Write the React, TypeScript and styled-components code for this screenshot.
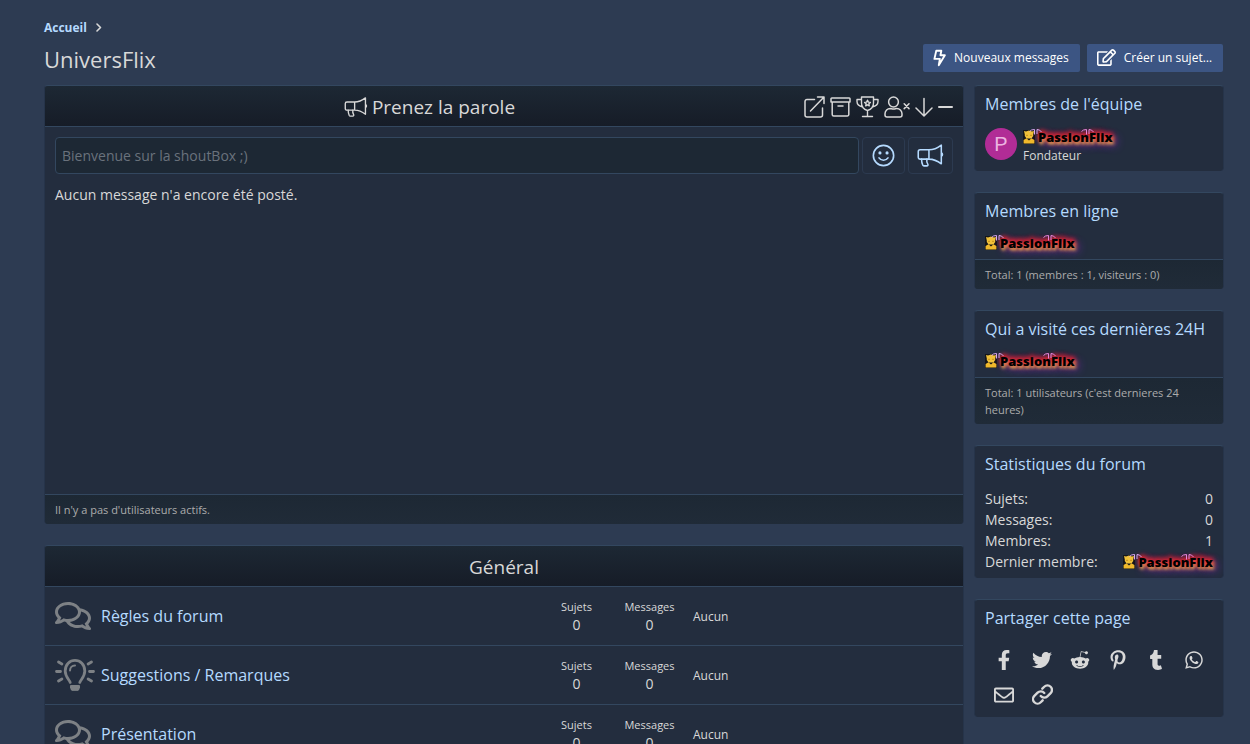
import React from "react";
import styled, { createGlobalStyle } from "styled-components";
import {
  FaFacebookF,
  FaTwitter,
  FaRedditAlien,
  FaPinterestP,
  FaTumblr,
  FaWhatsapp,
  FaRegEnvelope,
  FaRegComments,
  FaRegEdit,
} from "react-icons/fa";

const color = {
  page: "#2d3b52",
  block: "#232d3e",
  edge: "#26344a",
  line: "#33475f",
  dark: "#1d2834",
  deep: "#161c27",
  text: "#d8d8d8",
  muted: "#acacac",
  dim: "#6a727c",
  link: "#b5daff",
  button: "#3c5583",
};

const GlobalStyle = createGlobalStyle`
  *, *::before, *::after { box-sizing: border-box; }
  body {
    margin: 0;
    background: ${color.page};
    color: ${color.text};
    font-family: "Open Sans", "Noto Sans", sans-serif;
    font-size: 14px;
    line-height: 21px;
  }
  a { color: ${color.link}; text-decoration: none; }
  h1, h2, h3, dl, dd, dt, ul, ol, p { margin: 0; padding: 0; font-weight: 400; }
  ul, ol { list-style: none; }
  button, input { font: inherit; color: inherit; }
`;

const Page = styled.div`
  padding: 17px 26px 21px 44px;
`;

const Breadcrumb = styled.nav`
  display: flex;
  align-items: center;
  gap: 9px;
  height: 21px;
  font-size: 12px;
  font-weight: 700;
`;

const TitleBar = styled.header`
  display: flex;
  align-items: center;
  justify-content: space-between;
  height: 47px;
  padding-bottom: 8px;
`;

const PageTitle = styled.h1`
  padding-top: 3px;
  font-size: 22px;
  line-height: 34px;
`;

const Actions = styled.div`
  display: flex;
  gap: 7px;
  padding-right: 1px;
`;

const ActionButton = styled.a`
  display: flex;
  align-items: center;
  gap: 8px;
  height: 28px;
  padding: 0 11px 0 10px;
  border-radius: 2px;
  background: ${color.button};
  color: #fff;
  font-size: 12px;
`;

const Columns = styled.div`
  display: grid;
  grid-template-columns: minmax(0, 1fr) 250px;
  gap: 10px;
  align-items: start;
`;

const Stack = styled.div`
  display: flex;
  flex-direction: column;
  gap: 21px;
`;

const Block = styled.section`
  border: 1px solid ${color.edge};
  border-top-color: ${color.line};
  border-bottom: 0;
  border-radius: 4px;
  background: ${color.block};
`;

const BlockHeader = styled.div`
  display: flex;
  align-items: center;
  height: 41px;
  padding: 1px 10px 0;
  border-bottom: 1px solid ${color.line};
  border-radius: 3px 3px 0 0;
  background: linear-gradient(${color.dark}, ${color.deep});
`;

const BlockTitle = styled.h2`
  display: flex;
  flex: 1;
  align-items: center;
  justify-content: center;
  gap: 4px;
  font-size: 19px;
  line-height: 28px;
`;

const Tools = styled.div`
  display: flex;
  align-items: center;
  gap: 5px;
`;

const IconButton = styled.button`
  display: flex;
  padding: 0;
  border: 0;
  background: none;
  cursor: pointer;
`;

const ShoutBody = styled.div`
  min-height: 367px;
  padding: 10px;
`;

const ShoutForm = styled.form`
  display: flex;
  gap: 3px;
  margin-bottom: 10px;
`;

const ShoutInput = styled.input`
  flex: 1;
  min-width: 0;
  height: 37px;
  padding: 0 6px;
  border: 1px solid ${color.line};
  border-radius: 4px;
  background: ${color.dark};
  &::placeholder { color: ${color.dim}; opacity: 1; }
`;

const FormButton = styled.button<{ $wide?: boolean }>`
  display: flex;
  align-items: center;
  justify-content: center;
  width: ${(p) => (p.$wide ? 45 : 43)}px;
  padding: 0;
  border: 1px solid #2c3a50;
  border-radius: 4px;
  background: none;
  color: ${color.link};
  cursor: pointer;
`;

const BlockFooter = styled.footer`
  padding: 6px 10px;
  border-top: 1px solid ${color.line};
  border-radius: 0 0 3px 3px;
  background: linear-gradient(${color.dark}, #202b38);
  color: ${color.muted};
  font-size: 11px;
  line-height: 17px;
`;

const Forum = styled.li`
  display: grid;
  grid-template-columns: 46px minmax(0, 1fr) 73px 73px 277px;
  align-items: center;
  min-height: 58px;
  padding-left: 10px;
  & + & {
    min-height: 59px;
    border-top: 1px solid ${color.line};
  }
`;

const ForumIcon = styled.span`
  display: flex;
  color: #7d8185;
`;

const ForumTitle = styled.h3`
  font-size: 16px;
  line-height: 24px;
`;

const Stat = styled.dl`
  text-align: center;
  dt { font-size: 11px; line-height: 17px; }
  dd { line-height: 20px; }
`;

const LastPost = styled.span`
  padding-left: 7px;
  font-size: 12px;
`;

const WidgetTitle = styled.h3`
  height: 37px;
  padding: 6px 10px;
  color: ${color.link};
  font-size: 16px;
  line-height: 25px;
`;

const WidgetBody = styled.div`
  padding: 5px 10px;
`;

const StatsBody = styled.dl`
  && { padding: 5px 10px 6px; }
`;

const OnlineBody = styled.div`
  padding: 4px 10px 7px;
  line-height: 18px;
`;

const StaffRow = styled.div`
  display: flex;
  gap: 6px;
  padding-bottom: 6px;
`;

const Avatar = styled.a`
  display: flex;
  align-items: center;
  justify-content: center;
  width: 32px;
  height: 32px;
  border-radius: 50%;
  background: #b12c96;
  color: #ecb4e1;
  font-family: "Liberation Sans", sans-serif;
  font-size: 20px;
`;

const StaffInfo = styled.div`
  display: flex;
  flex-direction: column;
  height: 32px;
  font-size: 12px;
`;

const StaffRole = styled.span`
  line-height: 20px;
`;

const UserLink = styled.a`
  position: relative;
  display: inline-flex;
  align-items: center;
  gap: 3px;
  height: 18px;
  line-height: 18px;
  vertical-align: top;
`;

const UserName = styled.span`
  color: #000;
  font-size: 13px;
  font-weight: 800;
  text-shadow:
    0 -2px 4px #ff2222,
    1px -1px 6px #e0184a,
    1px 2px 3px #e0c060,
    2px 2px 4px #c08a40,
    4px 3px 9px #8a2cd0;
`;

const Sparkles = styled.svg`
  position: absolute;
  top: 1px;
  left: 6px;
`;

const Pair = styled.div`
  display: flex;
  align-items: center;
  justify-content: space-between;
  height: 21px;
`;

const PairValue = styled.dd`
  display: flex;
`;

const ShareList = styled.ul`
  display: grid;
  grid-template-columns: repeat(auto-fill, 38px);
  grid-auto-rows: 35px;
`;

const ShareLink = styled.a`
  display: flex;
  align-items: center;
  justify-content: center;
  height: 100%;
  color: ${color.text};
  font-size: 20px;
`;

type LineProps = { w: number; h: number; box: string; stroke?: number; children: React.ReactNode };

const Line = ({ w, h, box, stroke = 1.5, children }: LineProps) => (
  <svg
    width={w}
    height={h}
    viewBox={box}
    fill="none"
    stroke="currentColor"
    strokeWidth={stroke}
    strokeLinecap="round"
    strokeLinejoin="round"
    aria-hidden="true"
  >
    {children}
  </svg>
);

const Bullhorn = ({ w, h }: { w: number; h: number }) => (
  <Line w={w} h={h} box="0 0 26 22">
    <path d="M11.5 5.5H3A1.8 1.8 0 0 0 1.2 7.3v5.4A1.8 1.8 0 0 0 3 14.5h8.5zM11.5 5.5C16 5.500 20 3.600 23.400 1v18c-3.400-2.600-7.400-4.500-11.900-4.500M23.400 8.200a2 2 0 0 1 0 3.600" />
    <path d="M4.400 14.500c0 2.200.4 4.100 1.200 5.900.2.400.6.600 1 .600h2.900c.9 0 1.400-1 .9-1.700-.9-1.200-1.200-3-.9-4.800" />
  </Line>
);

const Smile = () => (
  <Line w={23} h={23} box="0 0 24 24" stroke={1.7}>
    <circle cx="12" cy="12" r="10.6" />
    <path d="M7.300 14.500c2.300 3.300 7.100 3.300 9.400 0" />
    <circle cx="8.3" cy="9.3" r=".8" fill="currentColor" />
    <circle cx="15.7" cy="9.3" r=".8" fill="currentColor" />
  </Line>
);

const OpenExternal = () => (
  <Line w={21} h={22} box="0 0 21 22">
    <path d="M10.500 3.500H3A2 2 0 0 0 1 5.500V19a2 2 0 0 0 2 2h13.500a2 2 0 0 0 2-2v-7M13.500 1H20v6.500M19.800 1.200 6.500 15" />
  </Line>
);

const Archive = () => (
  <Line w={21} h={20} box="0 0 21 20">
    <path d="M1.800 1h17.400a.8.8 0 0 1 .8.800V5H1V1.800A.8.8 0 0 1 1.800 1zM2.200 5v12.500A1.500 1.500 0 0 0 3.700 19h13.600a1.500 1.500 0 0 0 1.500-1.500V5M8 9h5" />
  </Line>
);

const Trophy = () => (
  <Line w={23} h={22} box="0 0 23 22" stroke={1.4}>
    <path d="M5.500 1h12v6c0 4-2.500 6.500-6 7.500-3.500-1-6-3.500-6-7.500zM5.500 3.500H1v2c0 3 2.500 4.800 5.800 5.500M17.500 3.500H22v2c0 3-2.500 4.800-5.800 5.500M11.500 14.500V20M6.500 20.500h10" />
    <path d="m11.500 4.200.9 1.900 2 .3-1.500 1.400.4 2-1.800-1-1.800 1 .4-2-1.500-1.400 2-.3z" />
  </Line>
);

const UserRemove = () => (
  <Line w={26} h={22} box="0 0 26 22">
    <circle cx="9.5" cy="6" r="4.9" />
    <path d="M6.300 12.500A5.400 5.400 0 0 0 1 17.800V19a2 2 0 0 0 2 2h13a2 2 0 0 0 2-2v-1.200a5.400 5.400 0 0 0-5.300-5.300c-1 0-1.600.6-3.200.6s-2.200-.6-3.200-.6zM20.200 7.800l4.800 4.800M25 7.800l-4.800 4.800" />
  </Line>
);

const ArrowDown = () => (
  <Line w={18} h={20} box="0 0 18 20">
    <path d="M9 1.500v17M1 11l8 8 8-8" />
  </Line>
);

const Minus = () => (
  <Line w={15} h={20} box="0 0 15 20" stroke={2}>
    <path d="M1 10h13" />
  </Line>
);

const Bolt = () => (
  <Line w={13} h={18} box="0 0 14 18" stroke={2}>
    <path d="M3.500 1.200h5.500L8 6h4.800L6.200 16.700 7.400 10H1.500z" />
  </Line>
);

const Bulb = () => (
  <Line w={40} h={34} box="0 0 40 34" stroke={2.8}>
    <path d="M15.200 24.500c-.6-2.600-5-5.700-5-11.500C10.200 6.500 14.800 2.400 20 2.400S29.800 6.500 29.800 13c0 5.800-4.400 8.900-5 11.500" />
    <path d="M15 12.500C15 9.500 17 7.400 20 7.400" strokeWidth="2" />
    <path d="M15 27.500h10v2.300l-2 3h-6l-2-3z" fill="currentColor" stroke="none" />
    <path d="M16.500 28.500h7M17 31h6" />
    <path d="M1.500 13.500h4M34.500 13.500h4M3.500 4l3.400 2M36.500 4l-3.400 2M3.500 23l3.400-2M36.500 23l-3.400-2" />
  </Line>
);

const Chain = () => (
  <Line w={21} h={21} box="0 0 24 24" stroke={2.7}>
    <path d="M10 13.800a5.200 5.200 0 0 0 7.600.3l3.700-3.700a5.100 5.100 0 0 0-7.300-7.300l-2.200 2.200" />
    <path d="M14 10.200a5.200 5.200 0 0 0-7.600-.3l-3.700 3.700a5.100 5.100 0 0 0 7.300 7.300l2.200-2.200" />
  </Line>
);

const Chevron = () => (
  <Line w={6} h={9} box="0 0 6 9" stroke={1.6}>
    <path d="M1 1l3.500 3.500L1 8" />
  </Line>
);

const User = () => (
  <UserLink href="#membre">
    <svg width="12" height="14" viewBox="0 0 12 14" aria-hidden="true">
      <path d="M0 0h12v14H0z" fill="#15161a" />
      <path d="M1 1l2 .6L6 .4l3 1.200L11 1l-.8 3.500V6L8.500 8.500h-5L1.800 6V4.500z" fill="#f0c13a" />
      <path d="M.6 13.500V10L3.500 8.300 6 10.500l2.500-2.200L11.400 10v3.500z" fill="#f0b92c" />
      <path d="M3 5.300h2M7 5.300h2" stroke="#c98f1c" />
    </svg>
    <UserName>PassionFlix</UserName>
    <Sparkles width="68" height="7" viewBox="0 0 68 7" fill="none" strokeWidth="1" aria-hidden="true">
      <path d="M.5 2.500Q2 .5 5.500.5v5M8 5V.5Q11 .5 12.500 3" stroke="#dba8f4" />
      <path d="M52.500 2.500Q54 .5 57.500.5v5M60 5V.5Q63 .5 64.500 3" stroke="#e886dc" />
    </Sparkles>
  </UserLink>
);

const forums = [
  { title: "Règles du forum", icon: <FaRegComments size={36} /> },
  { title: "Suggestions / Remarques", icon: <Bulb /> },
  { title: "Présentation", icon: <FaRegComments size={36} /> },
];

const shares = [
  { label: "Facebook", icon: <FaFacebookF /> },
  { label: "Twitter", icon: <FaTwitter /> },
  { label: "Reddit", icon: <FaRedditAlien /> },
  { label: "Pinterest", icon: <FaPinterestP /> },
  { label: "Tumblr", icon: <FaTumblr /> },
  { label: "WhatsApp", icon: <FaWhatsapp /> },
  { label: "E-mail", icon: <FaRegEnvelope /> },
  { label: "Lien", icon: <Chain /> },
];

const tools = [
  { label: "Ouvrir", icon: <OpenExternal /> },
  { label: "Archives", icon: <Archive /> },
  { label: "Classement", icon: <Trophy /> },
  { label: "Utilisateurs bannis", icon: <UserRemove /> },
  { label: "Descendre", icon: <ArrowDown /> },
  { label: "Réduire", icon: <Minus /> },
];

const stats = [
  { label: "Sujets:", value: "0" },
  { label: "Messages:", value: "0" },
  { label: "Membres:", value: "1" },
  { label: "Dernier membre:", value: <User /> },
];

export default function App() {
  return (
    <>
      <GlobalStyle />
      <Page>
        <Breadcrumb>
          <a href="#accueil">Accueil</a>
          <Chevron />
        </Breadcrumb>
        <TitleBar>
          <PageTitle>UniversFlix</PageTitle>
          <Actions>
            <ActionButton href="#nouveaux">
              <Bolt />
              Nouveaux messages
            </ActionButton>
            <ActionButton href="#creer">
              <FaRegEdit size={19} />
              Créer un sujet…
            </ActionButton>
          </Actions>
        </TitleBar>

        <Columns>
          <Stack as="main">
            <Block>
              <BlockHeader>
                <BlockTitle>
                  <Bullhorn w={24} h={20} />
                  Prenez la parole
                </BlockTitle>
                <Tools>
                  {tools.map((t) => (
                    <IconButton key={t.label} type="button" aria-label={t.label}>
                      {t.icon}
                    </IconButton>
                  ))}
                </Tools>
              </BlockHeader>
              <ShoutBody>
                <ShoutForm onSubmit={(e) => e.preventDefault()}>
                  <ShoutInput aria-label="Message" placeholder="Bienvenue sur la shoutBox ;)" />
                  <FormButton type="button" aria-label="Émoticônes">
                    <Smile />
                  </FormButton>
                  <FormButton type="submit" aria-label="Envoyer" $wide>
                    <Bullhorn w={27} h={23} />
                  </FormButton>
                </ShoutForm>
                <p>Aucun message n'a encore été posté.</p>
              </ShoutBody>
              <BlockFooter>Il n'y a pas d'utilisateurs actifs.</BlockFooter>
            </Block>

            <Block>
              <BlockHeader>
                <BlockTitle>Général</BlockTitle>
              </BlockHeader>
              <ul>
                {forums.map((f) => (
                  <Forum key={f.title}>
                    <ForumIcon>{f.icon}</ForumIcon>
                    <ForumTitle>
                      <a href="#forum">{f.title}</a>
                    </ForumTitle>
                    <Stat>
                      <dt>Sujets</dt>
                      <dd>0</dd>
                    </Stat>
                    <Stat>
                      <dt>Messages</dt>
                      <dd>0</dd>
                    </Stat>
                    <LastPost>Aucun</LastPost>
                  </Forum>
                ))}
              </ul>
            </Block>
          </Stack>

          <Stack as="aside">
            <Block>
              <WidgetTitle>Membres de l'équipe</WidgetTitle>
              <WidgetBody>
                <StaffRow>
                  <Avatar href="#membre">P</Avatar>
                  <StaffInfo>
                    <User />
                    <StaffRole>Fondateur</StaffRole>
                  </StaffInfo>
                </StaffRow>
              </WidgetBody>
            </Block>

            <Block>
              <WidgetTitle>Membres en ligne</WidgetTitle>
              <OnlineBody>
                <User />
              </OnlineBody>
              <BlockFooter>Total: 1 (membres : 1, visiteurs : 0)</BlockFooter>
            </Block>

            <Block>
              <WidgetTitle>Qui a visité ces dernières 24H</WidgetTitle>
              <OnlineBody>
                <User />
              </OnlineBody>
              <BlockFooter>Total: 1 utilisateurs (c'est dernieres 24 heures)</BlockFooter>
            </Block>

            <Block>
              <WidgetTitle>Statistiques du forum</WidgetTitle>
              <StatsBody>
                {stats.map((s) => (
                  <Pair key={s.label}>
                    <dt>{s.label}</dt>
                    <PairValue>{s.value}</PairValue>
                  </Pair>
                ))}
              </StatsBody>
            </Block>

            <Block>
              <WidgetTitle>Partager cette page</WidgetTitle>
              <WidgetBody>
                <ShareList>
                  {shares.map((s) => (
                    <li key={s.label}>
                      <ShareLink href="#partager" aria-label={s.label}>
                        {s.icon}
                      </ShareLink>
                    </li>
                  ))}
                </ShareList>
              </WidgetBody>
            </Block>
          </Stack>
        </Columns>
      </Page>
    </>
  );
}
